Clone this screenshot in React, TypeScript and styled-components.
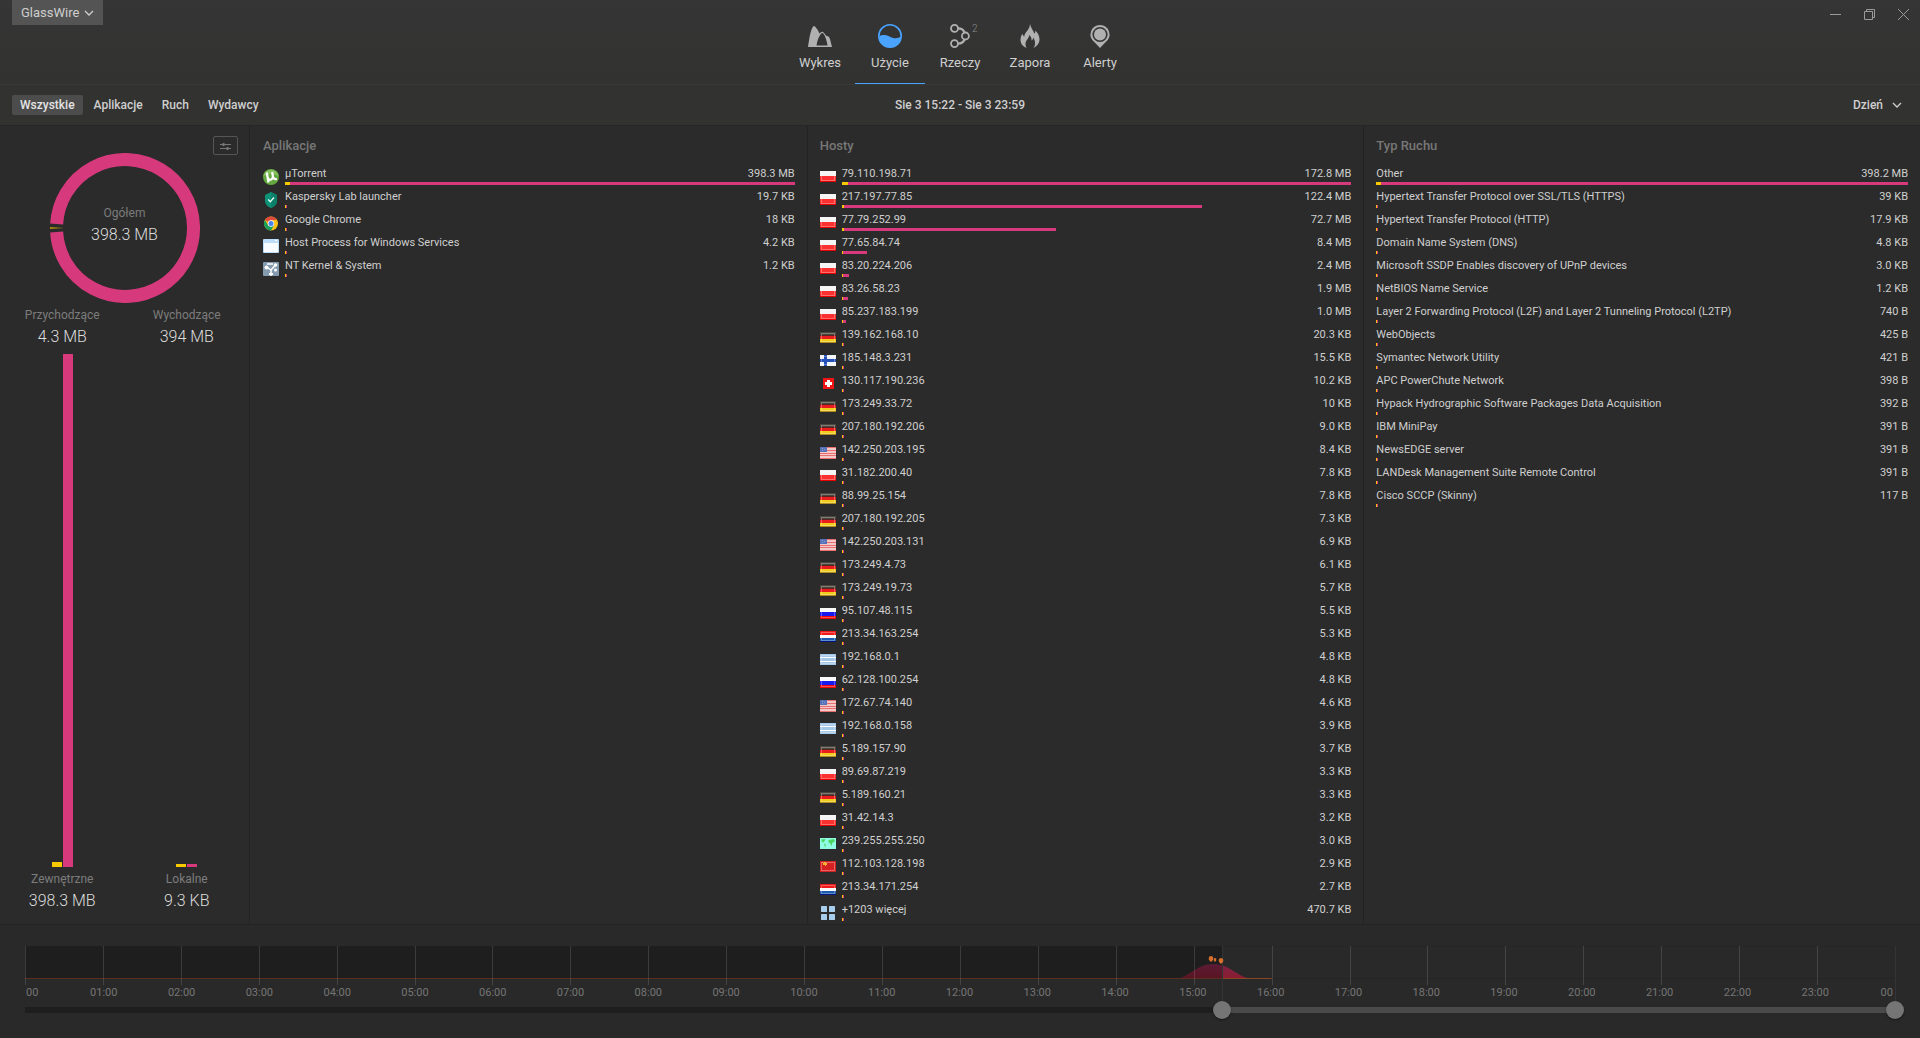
import React, { useState } from 'react';
import styled, { createGlobalStyle, css } from 'styled-components';

const pink = '#d7397d';
const yellow = '#f7ca00';

const GlobalStyle = createGlobalStyle`
  *, *::before, *::after { box-sizing: border-box; }
  body { margin: 0; background: #2b2b2b; }
  button, select, input { font: inherit; color: inherit; margin: 0; }
  button { border: 0; padding: 0; background: none; cursor: pointer; }
  ul { list-style: none; margin: 0; padding: 0; }
  svg { display: block; flex: none; }
`;

const Window = styled.div`
  min-height: 100vh;
  display: flex;
  flex-direction: column;
  background: #2b2b2b;
  color: #cfcfcf;
  font-family: Roboto, "Noto Sans", sans-serif;
  font-size: 13px;
  line-height: 16px;
`;

/* ---------- header ---------- */

const Header = styled.header`
  display: grid;
  grid-template-columns: 1fr auto 1fr;
  align-items: start;
  background: linear-gradient(#353535, #323231);
  border-bottom: 1px solid #393938;
`;

const AppMenu = styled.button`
  display: flex;
  align-items: center;
  gap: 5px;
  justify-self: start;
  height: 25px;
  margin-left: 12px;
  padding: 0 9px;
  background: #545454;
  color: #cfcfcf;
`;

const Nav = styled.nav`
  display: flex;
`;

const NavTab = styled.button<{ $active?: boolean }>`
  display: flex;
  flex-direction: column;
  align-items: center;
  gap: 7px;
  width: 70px;
  height: 84px;
  padding-top: 24px;
  color: #cfcfcf;
  border-bottom: 1px solid ${p => (p.$active ? '#4aa3ff' : 'transparent')};
`;

const NavIcon = styled.span<{ $active?: boolean }>`
  position: relative;
  color: ${p => (p.$active ? '#4aa3ff' : '#b0b0b0')};
`;

const NavCount = styled.span`
  position: absolute;
  left: 100%;
  top: 0;
  font-size: 10px;
  font-weight: 300;
  line-height: 9px;
  color: #8a8a8a;
`;

const WindowControls = styled.div`
  display: flex;
  justify-self: end;
`;

const WindowButton = styled.button`
  display: grid;
  place-items: center;
  width: 34px;
  height: 29px;
  color: #9a9a9a;
`;

/* ---------- filter bar ---------- */

const FilterBar = styled.div`
  display: grid;
  grid-template-columns: 1fr auto 1fr;
  align-items: center;
  height: 40px;
  padding: 0 12px;
  background: #323231;
  font-size: 12px;
  font-weight: 500;
`;

const Filters = styled.div`
  display: flex;
  gap: 3px;
`;

const FilterButton = styled.button<{ $active?: boolean }>`
  height: 20px;
  padding: 0 8px;
  border-radius: 2px;
  ${p => p.$active && css`background: #4c4c4c; color: #e4e4e4;`}
`;

const DateRange = styled.p`
  margin: 0;
`;

const PeriodField = styled.label`
  display: flex;
  align-items: center;
  justify-self: end;
  position: relative;
`;

const PeriodSelect = styled.select`
  appearance: none;
  border: 0;
  background: transparent;
  height: 20px;
  padding: 0 24px 0 0;
  cursor: pointer;
  option { background: #323231; }
`;

const PeriodChevron = styled.span`
  position: absolute;
  right: 6px;
  pointer-events: none;
`;

/* ---------- body ---------- */

const Main = styled.main`
  flex: 1;
  display: flex;
  border-top: 1px solid #272727;
`;

const Sidebar = styled.aside`
  flex: none;
  display: flex;
  flex-direction: column;
  width: 250px;
  padding: 10px 0 13px;
  border-right: 1px solid #232323;
`;

const OptionsButton = styled.button`
  display: grid;
  place-items: center;
  align-self: flex-end;
  width: 25px;
  height: 19px;
  margin-right: 11px;
  border: 1px solid #555;
  border-radius: 2px;
  color: #777;
`;

const Stat = styled.div`
  display: flex;
  flex-direction: column;
  align-items: center;
  gap: 4px;
`;

const StatLabel = styled.span`
  font-size: 12px;
  color: #7c7c7c;
`;

const StatValue = styled.span`
  font-size: 16px;
  font-weight: 300;
  line-height: 20px;
  color: #dcdcdc;
`;

const Donut = styled.div`
  display: grid;
  place-items: center;
  margin: -2px 0 4px;
  > * { grid-area: 1 / 1; }
  > ${Stat} { padding-bottom: 6px; }
`;

const StatRow = styled.div`
  display: grid;
  grid-template-columns: 1fr 1fr;
`;

const Meters = styled(StatRow)`
  flex: 1;
  padding: 7px 0 4px;
`;

const Meter = styled.div`
  display: flex;
  justify-content: center;
  align-items: flex-end;
  gap: 1px;
`;

const MeterBar = styled.span<{ $color: string }>`
  width: 10px;
  min-height: 3px;
  background: ${p => p.$color};
`;

const Column = styled.section`
  flex: 1 1 0;
  min-width: 0;
  padding: 10px 12px 2px 13px;
  & + & { border-left: 1px solid #232323; padding-left: 12px; }
`;

const ColumnTitle = styled.h2`
  margin: 0 0 7px;
  font-size: 13px;
  font-weight: 500;
  line-height: 20px;
  color: #777;
`;

const Row = styled.li`
  display: flex;
  align-items: flex-end;
  gap: 6px;
  height: 23px;
  padding-bottom: 1px;
`;

const RowBody = styled.div`
  flex: 1;
  min-width: 0;
`;

const RowText = styled.div`
  display: flex;
  justify-content: space-between;
  gap: 12px;
  font-size: 11px;
  line-height: 14px;
  white-space: nowrap;
`;

const RowBar = styled.div`
  display: flex;
  height: 3px;
  min-width: 2px;
  margin-top: 1px;
  background: ${pink};
`;

const RowBarIn = styled.span<{ $w: number }>`
  width: ${p => p.$w}px;
  background: ${yellow};
`;

/* ---------- timeline ---------- */

const Timeline = styled.footer`
  padding: 21px 25px 25px;
  border-top: 1px solid #232323;
  background: #292929;
`;

const Plot = styled.div`
  position: relative;
  height: 39px;
`;

const PlotArea = styled.div`
  position: absolute;
  inset: 0 0 6px;
  border-top: 1px solid #262626;
  border-bottom: 1px solid #242424;
`;

const Shade = styled.div`
  position: absolute;
  top: 0;
  bottom: 6px;
  left: 0;
  background: #1e1e1e;
`;

const PlotDrawing = styled.svg`
  position: absolute;
  top: 0;
  left: 0;
  width: 100%;
  height: 33px;
`;

const Ticks = styled.div`
  position: absolute;
  inset: 0;
  display: grid;
  grid-template-columns: repeat(24, 1fr);
`;

const Tick = styled.span`
  border-left: 1px solid rgba(255, 255, 255, 0.13);
`;

const Cursor = styled.span`
  position: absolute;
  top: 0;
  height: 56px;
  width: 1px;
  background: #343434;
`;

const Pin = styled.svg`
  position: absolute;
  transform: translateX(-50%);
`;

const HourLabels = styled.div`
  display: grid;
  grid-template-columns: 1fr repeat(23, 2fr) 1fr;
  padding: 0 2px 0 1px;
  font-size: 11px;
  line-height: 16px;
  color: #757575;
  text-align: center;
  > :first-child { text-align: left; }
  > :last-child { text-align: right; }
`;

const RangeTrack = styled.div`
  position: relative;
  height: 6px;
  margin-top: 6px;
  background: #1e1e1e;
`;

const RangeFill = styled.div`
  height: 6px;
  margin-left: auto;
  background: #4a4a4a;
`;

const RangeInput = styled.input`
  appearance: none;
  position: absolute;
  top: -6px;
  left: -9px;
  width: calc(100% + 18px);
  height: 18px;
  background: none;
  pointer-events: none;
  &::-webkit-slider-thumb {
    appearance: none;
    width: 18px;
    height: 18px;
    border: 0;
    border-radius: 50%;
    background: #757575;
    box-shadow: 0 1px 2px rgba(0, 0, 0, 0.5);
    pointer-events: auto;
  }
`;

/* ---------- icons ---------- */

const Chevron = () => (
  <svg width="10" height="10" viewBox="0 0 10 10" fill="none" stroke="currentColor" strokeWidth="1.3">
    <path d="M1 3l4 4 4-4" />
  </svg>
);

const navIcons: Record<string, React.ReactNode> = {
  Wykres: (
    <svg width="24" height="24" viewBox="0 0 24 24" fill="currentColor">
      <path fillRule="evenodd" d="M0 23C1 16 2.300 8 4 4.500Q5.500 1 7 2.500Q9.500 5 11.500 9.500Q14 6.500 16 9L18.500 12Q21 11.500 22 15L24 23ZM8.500 21.500H19.500C18.800 17 17.500 12.500 15.500 9.800Q14 8 12.500 10.500C10.500 13 9.200 17 8.500 21.500Z" />
    </svg>
  ),
  Użycie: (
    <svg width="24" height="24" viewBox="0 0 24 24">
      <circle cx="12" cy="12" r="11.200" fill="none" stroke="currentColor" strokeWidth="1.600" />
      <path d="M1 12.500C4 10.500 8 10.500 12 12.700S20 14.500 23 12.500A11 11 0 0 1 1 12.500Z" fill="currentColor" />
    </svg>
  ),
  Rzeczy: (
    <svg width="24" height="24" viewBox="0 0 24 24" fill="none" stroke="currentColor" strokeWidth="1.800">
      <circle cx="6.500" cy="4.400" r="3.500" />
      <circle cx="17.400" cy="12" r="3.500" />
      <circle cx="6.500" cy="19.600" r="3.500" />
      <path d="M10 4.400C14 4.400 15.500 5.500 16.500 8.600M10 19.600C14 19.600 15.500 18.500 16.500 15.400" strokeWidth="2.200" />
    </svg>
  ),
  Zapora: (
    <svg width="24" height="24" viewBox="0 0 24 24" fill="currentColor">
      <path d="M12 0C12.800 4 15.500 6.500 16.200 9.500C17.300 9 17.500 7.800 17.300 6.500C20 9 21.500 12 21.500 15.500C21.500 19 19.500 22 15.500 24C17.800 20.500 17.500 17.500 15.300 13.500C15.200 15 14.500 16 13.500 16.500C13.800 14.500 13 12.500 11.200 11C11 14.500 7.500 16.500 7.500 20Q7.500 22.500 8.500 24C4.800 22.500 2.500 19.500 2.500 16C2.500 13.500 3.300 11.500 4.500 9.800C4.800 11.200 5.300 12 6.300 12.500C6.300 8.500 11.800 6 12 0Z" />
    </svg>
  ),
  Alerty: (
    <svg width="24" height="24" viewBox="0 0 24 24" fill="currentColor">
      <path fillRule="evenodd" d="M12 1A9.500 9.500 0 0 1 17.500 18.200L12 24L6.500 18.200A9.500 9.500 0 0 1 12 1ZM12 2.900A7.600 7.600 0 1 0 12 18.100A7.600 7.600 0 1 0 12 2.900Z" />
      <circle cx="12" cy="10.500" r="6" />
    </svg>
  ),
};

const appIcons: Record<string, React.ReactNode> = {
  utorrent: (
    <svg width="16" height="16" viewBox="0 0 16 16">
      <circle cx="8" cy="8" r="8" fill="#65a840" />
      <path d="M0.500 7A7.600 7.600 0 0 1 15.500 7Q8 3 0.500 7Z" fill="#84c05e" />
      <path d="M3.800 3.500L5.500 13.500M4.800 9Q6 11.500 8.200 10.500Q10.200 9.500 9.800 7L9.200 3M9.800 7Q10.500 10.800 14 10" fill="none" stroke="#fff" strokeWidth="2.200" />
    </svg>
  ),
  kaspersky: (
    <svg width="16" height="16" viewBox="0 0 16 16">
      <path d="M8 0L14 3V9Q14 13.500 8 16Q2 13.500 2 9V3Z" fill="#0d9377" />
      <path d="M8 0L14 3V9Q14 13.500 8 16Z" fill="#0b7f69" />
      <path d="M5.200 7.500L7.300 9.700L11 5.500" fill="none" stroke="#e8fff8" strokeWidth="1.300" />
    </svg>
  ),
  chrome: (
    <svg width="16" height="16" viewBox="0 0 16 16">
      <circle cx="8" cy="8.500" r="7" fill="#fbc116" />
      <path d="M8 8.500L1.900 5A7 7 0 0 1 14.100 5H8Z" fill="#dd4b3e" />
      <path d="M1.900 5A7 7 0 0 0 8 15.500L11 10.200L8 8.500L5 10.200Z" fill="#1a9f58" />
      <circle cx="8" cy="8.500" r="3.200" fill="#fff" />
      <circle cx="8" cy="8.500" r="2.500" fill="#4a80f0" />
    </svg>
  ),
  host: (
    <svg width="16" height="16" viewBox="0 0 16 16">
      <rect y="1" width="16" height="14" rx="1" fill="#bcdcfa" />
      <rect x="1" y="5" width="14" height="9" fill="#f8fbff" />
      <rect x="12" y="2" width="2" height="1" fill="#fff" />
    </svg>
  ),
  kernel: (
    <svg width="16" height="16" viewBox="0 0 16 16">
      <rect y="1" width="16" height="14" rx="1" fill="#849bb0" />
      <path d="M8 15V8M8 9L3.500 6M8 9L12 4.500M4 3L10 3" fill="none" stroke="#fff" strokeWidth="1.500" />
      <circle cx="3.500" cy="6.500" r="2" fill="#fff" />
      <circle cx="12.500" cy="4" r="1.800" fill="#fff" />
      <circle cx="12.500" cy="9" r="1.500" fill="#fff" />
      <rect x="6" y="12" width="4" height="2" fill="#fff" />
    </svg>
  ),
};

const Gloss = () => <rect x="1.500" y="3.500" width="13" height="8" fill="none" stroke="#fff" strokeOpacity="0.300" />;

const Stripes = ({ colors }: { colors: [string, number][] }) => {
  let y = 2;
  return (
    <svg width="16" height="16" viewBox="0 0 16 16" shapeRendering="crispEdges">
      {colors.map(([fill, h], i) => {
        const top = y;
        y += h;
        return <rect key={i} y={top} width="16" height={h} fill={fill} />;
      })}
      <Gloss />
    </svg>
  );
};

const flagIcons: Record<string, React.ReactNode> = {
  pl: <Stripes colors={[['#f4f4f4', 5], ['#fb3030', 5], ['#e80000', 1]]} />,
  de: <Stripes colors={[['#4a463e', 3], ['#5c2420', 1], ['#ea1c1c', 3], ['#f0cc1c', 3], ['#b08c20', 1]]} />,
  ru: <Stripes colors={[['#fafafa', 4], ['#1818f0', 4], ['#f00808', 3]]} />,
  nl: <Stripes colors={[['#f01818', 4], ['#fafafa', 3], ['#1c5cb0', 3], ['#001480', 1]]} />,
  lan: <Stripes colors={[['#a4c8e8', 3], ['#fff', 1], ['#a4c8e8', 3], ['#fff', 1], ['#a4c8e8', 3]]} />,
  fi: (
    <svg width="16" height="16" viewBox="0 0 16 16" shapeRendering="crispEdges">
      <rect y="2" width="16" height="11" fill="#f2f5fa" />
      <path d="M0 6h16v3H0zM4 2h3v11H4z" fill="#2450b8" />
      <Gloss />
    </svg>
  ),
  ch: (
    <svg width="16" height="16" viewBox="0 0 16 16" shapeRendering="crispEdges">
      <rect x="3" y="2" width="11" height="11" fill="#f01414" />
      <path d="M7 4h3v2h2v3h-2v2H7V9H5V6h2z" fill="#fff" />
    </svg>
  ),
  us: (
    <svg width="16" height="16" viewBox="0 0 16 16" shapeRendering="crispEdges">
      <rect y="2" width="16" height="12" fill="#f5c8c8" />
      <path d="M0 2h16v1H0zM0 5h16v1H0zM0 8h16v1H0zM0 10h16v1H0zM0 13h16v1H0z" fill="#e87070" />
      <rect y="2" width="7" height="5" fill="#5872b8" />
      <path d="M2 3h1v1H2zM4 4h1v1H4zM2 5h1v1H2z" fill="#8ca0d8" />
    </svg>
  ),
  world: (
    <svg width="16" height="16" viewBox="0 0 16 16">
      <rect y="2" width="16" height="11" fill="#90fce4" />
      <path d="M1 3.500L5.500 3L4 6L2.500 6.500ZM4 7.500L6 8.500L5 11.500ZM8.500 4L14 3L15 5.500L12.500 6.500L11.500 10L10 7L8.500 6.500Z" fill="#4cd860" />
    </svg>
  ),
  cn: (
    <svg width="16" height="16" viewBox="0 0 16 16" shapeRendering="crispEdges">
      <rect y="2" width="16" height="11" fill="#d42020" />
      <Gloss />
      <path d="M2 3h1v1H2zM4 3h2v1h1v2H6v1H5V6H3V4h1z" fill="#f8b030" />
    </svg>
  ),
  more: (
    <svg width="16" height="16" viewBox="0 0 16 16" fill="#a8cdea">
      <rect x="1" y="1" width="6" height="6" rx="0.500" />
      <rect x="9" y="1" width="6" height="6" rx="0.500" />
      <rect x="1" y="9" width="6" height="6" rx="0.500" />
      <rect x="9" y="9" width="6" height="6" rx="0.500" />
    </svg>
  ),
};

/* ---------- data ---------- */

type Entry = { icon?: string; name: string; value: string; share?: number; inbound?: number };

const apps: Entry[] = [
  { icon: 'utorrent', name: 'µTorrent', value: '398.3 MB', share: 100, inbound: 5 },
  { icon: 'kaspersky', name: 'Kaspersky Lab launcher', value: '19.7 KB' },
  { icon: 'chrome', name: 'Google Chrome', value: '18 KB' },
  { icon: 'host', name: 'Host Process for Windows Services', value: '4.2 KB' },
  { icon: 'kernel', name: 'NT Kernel & System', value: '1.2 KB' },
];

const hosts: Entry[] = [
  { icon: 'pl', name: '79.110.198.71', value: '172.8 MB', share: 100, inbound: 6 },
  { icon: 'pl', name: '217.197.77.85', value: '122.4 MB', share: 70.7, inbound: 2 },
  { icon: 'pl', name: '77.79.252.99', value: '72.7 MB', share: 42.1, inbound: 2 },
  { icon: 'pl', name: '77.65.84.74', value: '8.4 MB', share: 4.9 },
  { icon: 'pl', name: '83.20.224.206', value: '2.4 MB', share: 1.4 },
  { icon: 'pl', name: '83.26.58.23', value: '1.9 MB', share: 1.2 },
  { icon: 'pl', name: '85.237.183.199', value: '1.0 MB', share: 0.8 },
  { icon: 'de', name: '139.162.168.10', value: '20.3 KB' },
  { icon: 'fi', name: '185.148.3.231', value: '15.5 KB' },
  { icon: 'ch', name: '130.117.190.236', value: '10.2 KB' },
  { icon: 'de', name: '173.249.33.72', value: '10 KB' },
  { icon: 'de', name: '207.180.192.206', value: '9.0 KB' },
  { icon: 'us', name: '142.250.203.195', value: '8.4 KB' },
  { icon: 'pl', name: '31.182.200.40', value: '7.8 KB' },
  { icon: 'de', name: '88.99.25.154', value: '7.8 KB' },
  { icon: 'de', name: '207.180.192.205', value: '7.3 KB' },
  { icon: 'us', name: '142.250.203.131', value: '6.9 KB' },
  { icon: 'de', name: '173.249.4.73', value: '6.1 KB' },
  { icon: 'de', name: '173.249.19.73', value: '5.7 KB' },
  { icon: 'ru', name: '95.107.48.115', value: '5.5 KB' },
  { icon: 'nl', name: '213.34.163.254', value: '5.3 KB' },
  { icon: 'lan', name: '192.168.0.1', value: '4.8 KB' },
  { icon: 'ru', name: '62.128.100.254', value: '4.8 KB' },
  { icon: 'us', name: '172.67.74.140', value: '4.6 KB' },
  { icon: 'lan', name: '192.168.0.158', value: '3.9 KB' },
  { icon: 'de', name: '5.189.157.90', value: '3.7 KB' },
  { icon: 'pl', name: '89.69.87.219', value: '3.3 KB' },
  { icon: 'de', name: '5.189.160.21', value: '3.3 KB' },
  { icon: 'pl', name: '31.42.14.3', value: '3.2 KB' },
  { icon: 'world', name: '239.255.255.250', value: '3.0 KB' },
  { icon: 'cn', name: '112.103.128.198', value: '2.9 KB' },
  { icon: 'nl', name: '213.34.171.254', value: '2.7 KB' },
  { icon: 'more', name: '+1203 więcej', value: '470.7 KB' },
];

const traffic: Entry[] = [
  { name: 'Other', value: '398.2 MB', share: 100, inbound: 5 },
  { name: 'Hypertext Transfer Protocol over SSL/TLS (HTTPS)', value: '39 KB' },
  { name: 'Hypertext Transfer Protocol (HTTP)', value: '17.9 KB' },
  { name: 'Domain Name System (DNS)', value: '4.8 KB' },
  { name: 'Microsoft SSDP Enables discovery of UPnP devices', value: '3.0 KB' },
  { name: 'NetBIOS Name Service', value: '1.2 KB' },
  { name: 'Layer 2 Forwarding Protocol (L2F) and Layer 2 Tunneling Protocol (L2TP)', value: '740 B' },
  { name: 'WebObjects', value: '425 B' },
  { name: 'Symantec Network Utility', value: '421 B' },
  { name: 'APC PowerChute Network', value: '398 B' },
  { name: 'Hypack Hydrographic Software Packages Data Acquisition', value: '392 B' },
  { name: 'IBM MiniPay', value: '391 B' },
  { name: 'NewsEDGE server', value: '391 B' },
  { name: 'LANDesk Management Suite Remote Control', value: '391 B' },
  { name: 'Cisco SCCP (Skinny)', value: '117 B' },
];

const icons = { ...appIcons, ...flagIcons };
const DAY = 1440;

/* Midnight at both ends of the axis is shortened to the bare hour. */
const hours = Array.from({ length: 25 }, (_, h) =>
  h % 24 === 0 ? '00' : `${String(h).padStart(2, '0')}:00`
);

const pins = [
  { minute: 913, top: 10, width: 5, height: 6 },
  { minute: 916, top: 12, width: 3, height: 4 },
  { minute: 921, top: 12, width: 5, height: 6 },
];

const hump = 'M886 33C896 32 902 18 915 18C928 18 934 32 945 33Z';

const UsageColumn = ({ title, entries }: { title: string; entries: Entry[] }) => (
  <Column>
    <ColumnTitle>{title}</ColumnTitle>
    <ul>
      {entries.map(e => (
        <Row key={e.name}>
          {e.icon && icons[e.icon]}
          <RowBody>
            <RowText>
              <span>{e.name}</span>
              <span>{e.value}</span>
            </RowText>
            <RowBar style={{ width: `${e.share ?? 0}%` }}>
              <RowBarIn $w={e.inbound ?? 1} />
            </RowBar>
          </RowBody>
        </Row>
      ))}
    </ul>
  </Column>
);

const StatBlock = ({ label, value }: { label: string; value: string }) => (
  <Stat>
    <StatLabel>{label}</StatLabel>
    <StatValue>{value}</StatValue>
  </Stat>
);

export default function App() {
  const [tab, setTab] = useState('Użycie');
  const [filter, setFilter] = useState('Wszystkie');
  const [from, setFrom] = useState(922);
  const [to, setTo] = useState(DAY);

  return (
    <Window>
      <GlobalStyle />
      <Header>
        <AppMenu>GlassWire <Chevron /></AppMenu>
        <Nav>
          {Object.keys(navIcons).map(name => (
            <NavTab key={name} $active={name === tab} onClick={() => setTab(name)}>
              <NavIcon $active={name === tab}>
                {navIcons[name]}
                {name === 'Rzeczy' && <NavCount>2</NavCount>}
              </NavIcon>
              <span>{name}</span>
            </NavTab>
          ))}
        </Nav>
        <WindowControls>
          <WindowButton aria-label="Minimalizuj">
            <svg width="11" height="11" viewBox="0 0 11 11" stroke="currentColor"><path d="M0 5.500h11" /></svg>
          </WindowButton>
          <WindowButton aria-label="Przywróć">
            <svg width="11" height="11" viewBox="0 0 11 11" fill="none" stroke="currentColor"><path d="M0.500 2.500h8v8h-8zM2.500 2.500v-2h8v8h-2" /></svg>
          </WindowButton>
          <WindowButton aria-label="Zamknij">
            <svg width="11" height="11" viewBox="0 0 11 11" stroke="currentColor"><path d="M0 0L11 11M11 0L0 11" /></svg>
          </WindowButton>
        </WindowControls>
      </Header>

      <FilterBar>
        <Filters>
          {['Wszystkie', 'Aplikacje', 'Ruch', 'Wydawcy'].map(name => (
            <FilterButton key={name} $active={name === filter} onClick={() => setFilter(name)}>{name}</FilterButton>
          ))}
        </Filters>
        <DateRange>Sie 3 15:22 - Sie 3 23:59</DateRange>
        <PeriodField>
          <PeriodSelect aria-label="Okres" defaultValue="Dzień">
            <option>Dzień</option>
          </PeriodSelect>
          <PeriodChevron><Chevron /></PeriodChevron>
        </PeriodField>
      </FilterBar>

      <Main>
        <Sidebar>
          <OptionsButton aria-label="Opcje">
            <svg width="11" height="8" viewBox="0 0 11 8" stroke="currentColor">
              <path d="M0 2.500h11M0 6.500h11" />
              <path d="M3.500 1v3M7.500 5v3" strokeWidth="2" />
            </svg>
          </OptionsButton>
          <Donut>
            <svg width="150" height="150" viewBox="0 0 150 150">
              <defs>
                <linearGradient id="sliver" x1="0" x2="1">
                  <stop offset="0" stopColor="#a88b0c" />
                  <stop offset="1" stopColor="#35332a" />
                </linearGradient>
              </defs>
              <path d="M6.640 71A68.500 68.500 0 1 1 6.640 79" fill="none" stroke={pink} strokeWidth="13" />
              <rect x="0" y="74" width="13" height="2" fill="url(#sliver)" />
            </svg>
            <StatBlock label="Ogółem" value="398.3 MB" />
          </Donut>
          <StatRow>
            <StatBlock label="Przychodzące" value="4.3 MB" />
            <StatBlock label="Wychodzące" value="394 MB" />
          </StatRow>
          <Meters>
            <Meter>
              <MeterBar $color={yellow} style={{ height: '1%' }} />
              <MeterBar $color={pink} style={{ height: '100%' }} />
            </Meter>
            <Meter>
              <MeterBar $color={yellow} />
              <MeterBar $color={pink} />
            </Meter>
          </Meters>
          <StatRow>
            <StatBlock label="Zewnętrzne" value="398.3 MB" />
            <StatBlock label="Lokalne" value="9.3 KB" />
          </StatRow>
        </Sidebar>
        <UsageColumn title="Aplikacje" entries={apps} />
        <UsageColumn title="Hosty" entries={hosts} />
        <UsageColumn title="Typ Ruchu" entries={traffic} />
      </Main>

      <Timeline>
        <Plot>
          <PlotArea />
          <Shade style={{ width: `${(from / DAY) * 100}%` }} />
          <PlotDrawing viewBox="0 0 1440 33" preserveAspectRatio="none">
            <defs>
              <linearGradient id="past" x1="0" x2="0" y1="0" y2="1">
                <stop offset="0" stopColor="#5c1b36" />
                <stop offset="1" stopColor="#5a1522" />
              </linearGradient>
              <linearGradient id="present" x1="0" x2="0" y1="0" y2="1">
                <stop offset="0" stopColor="#7c2248" />
                <stop offset="1" stopColor="#8c1d2e" />
              </linearGradient>
              <clipPath id="before"><rect width={from} height="33" /></clipPath>
              <clipPath id="after"><rect x={from} width={DAY} height="33" /></clipPath>
            </defs>
            <path clipPath="url(#before)" fill="url(#past)" d={hump} />
            <path clipPath="url(#after)" fill="url(#present)" d={hump} />
            <rect y="32" width={Math.min(from, 960)} height="1" fill="#592e1d" />
            <rect x={from} y="32" width={Math.max(960 - from, 0)} height="1" fill="#8a4524" />
          </PlotDrawing>
          <Ticks>{hours.slice(1).map(h => <Tick key={h} />)}</Ticks>
          <Cursor style={{ left: `${(from / DAY) * 100}%` }} />
          <Cursor style={{ left: `${(to / DAY) * 100}%` }} />
          {pins.map(p => (
            <Pin key={p.minute} width={p.width} height={p.height} viewBox="0 0 5 6" preserveAspectRatio="none" style={{ left: `${(p.minute / DAY) * 100}%`, top: p.top }}>
              <path d="M2.500 0A2.500 2.500 0 0 1 4 4.500L2.500 6L1 4.500A2.500 2.500 0 0 1 2.500 0Z" fill="#d56f2b" />
            </Pin>
          ))}
        </Plot>
        <HourLabels>{hours.map((h, i) => <span key={i}>{h}</span>)}</HourLabels>
        <RangeTrack>
          <RangeFill style={{ width: `${((to - from) / DAY) * 100}%`, marginRight: `${(1 - to / DAY) * 100}%` }} />
          <RangeInput type="range" aria-label="Początek" min={0} max={DAY} value={from} onChange={e => setFrom(Math.min(+e.target.value, to))} />
          <RangeInput type="range" aria-label="Koniec" min={0} max={DAY} value={to} onChange={e => setTo(Math.max(+e.target.value, from))} />
        </RangeTrack>
      </Timeline>
    </Window>
  );
}
